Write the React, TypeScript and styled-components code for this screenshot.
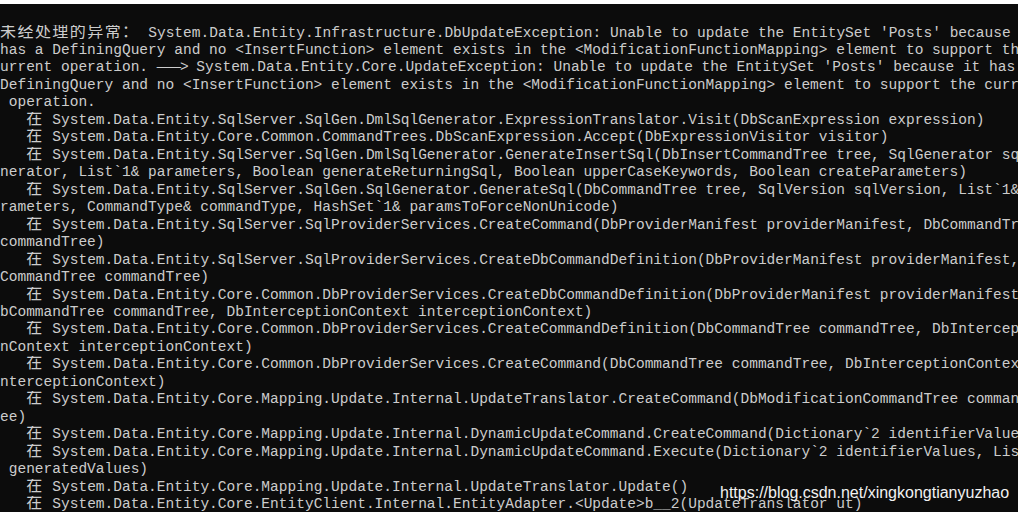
import React from 'react'
import styled, { createGlobalStyle } from 'styled-components'

const GlobalStyle = createGlobalStyle`
  html, body {
    margin: 0;
    padding: 0;
    background: #ffffff;
  }
  #root {
    width: 1018px;
    height: 512px;
    overflow: hidden;
  }
`

const Screen = styled.div`
  position: relative;
  display: flex;
  flex-direction: column;
  width: 1018px;
  height: 512px;
  overflow: hidden;
`

const TopStrip = styled.div`
  height: 4px;
  flex: none;
  background: #ffffff;
`

const Console = styled.div`
  flex: 1;
  background: #0c0c0c;
  color: #cccccc;
  padding-top: 20.5px;
  overflow: hidden;
  font-family: "Liberation Mono", "DejaVu Sans Mono", monospace;
  font-size: 14.53px;
`

const Row = styled.div`
  height: 17.48px;
  line-height: 17.48px;
  white-space: pre;
  overflow: hidden;
`

// full-width characters take two console cells
const Han = styled.span`
  font-family: "Noto Sans CJK SC", "Noto Sans CJK JP", sans-serif;
  font-size: 16px;
  line-height: 0;
  letter-spacing: 1.44px;
`

const Arrow = styled.span`
  letter-spacing: -1px;
`

const Watermark = styled.div`
  position: absolute;
  left: 720px;
  top: 485px;
  font-family: "Liberation Sans", Arial, sans-serif;
  font-size: 16px;
  line-height: 16px;
  color: #f2f2f2;
  white-space: nowrap;
`

const rows: string[] = [
  '未经处理的异常： System.Data.Entity.Infrastructure.DbUpdateException: Unable to update the EntitySet \'Posts\' because it ',
  'has a DefiningQuery and no <InsertFunction> element exists in the <ModificationFunctionMapping> element to support the c',
  'urrent operation. ---> System.Data.Entity.Core.UpdateException: Unable to update the EntitySet \'Posts\' because it has a ',
  'DefiningQuery and no <InsertFunction> element exists in the <ModificationFunctionMapping> element to support the current',
  ' operation.',
  '   在 System.Data.Entity.SqlServer.SqlGen.DmlSqlGenerator.ExpressionTranslator.Visit(DbScanExpression expression)',
  '   在 System.Data.Entity.Core.Common.CommandTrees.DbScanExpression.Accept(DbExpressionVisitor visitor)',
  '   在 System.Data.Entity.SqlServer.SqlGen.DmlSqlGenerator.GenerateInsertSql(DbInsertCommandTree tree, SqlGenerator sqlGe',
  'nerator, List`1& parameters, Boolean generateReturningSql, Boolean upperCaseKeywords, Boolean createParameters)',
  '   在 System.Data.Entity.SqlServer.SqlGen.SqlGenerator.GenerateSql(DbCommandTree tree, SqlVersion sqlVersion, List`1& pa',
  'rameters, CommandType& commandType, HashSet`1& paramsToForceNonUnicode)',
  '   在 System.Data.Entity.SqlServer.SqlProviderServices.CreateCommand(DbProviderManifest providerManifest, DbCommandTree ',
  'commandTree)',
  '   在 System.Data.Entity.SqlServer.SqlProviderServices.CreateDbCommandDefinition(DbProviderManifest providerManifest, Db',
  'CommandTree commandTree)',
  '   在 System.Data.Entity.Core.Common.DbProviderServices.CreateDbCommandDefinition(DbProviderManifest providerManifest, D',
  'bCommandTree commandTree, DbInterceptionContext interceptionContext)',
  '   在 System.Data.Entity.Core.Common.DbProviderServices.CreateCommandDefinition(DbCommandTree commandTree, DbInterceptio',
  'nContext interceptionContext)',
  '   在 System.Data.Entity.Core.Common.DbProviderServices.CreateCommand(DbCommandTree commandTree, DbInterceptionContext i',
  'nterceptionContext)',
  '   在 System.Data.Entity.Core.Mapping.Update.Internal.UpdateTranslator.CreateCommand(DbModificationCommandTree commandTr',
  'ee)',
  '   在 System.Data.Entity.Core.Mapping.Update.Internal.DynamicUpdateCommand.CreateCommand(Dictionary`2 identifierValues)',
  '   在 System.Data.Entity.Core.Mapping.Update.Internal.DynamicUpdateCommand.Execute(Dictionary`2 identifierValues, List`1',
  ' generatedValues)',
  '   在 System.Data.Entity.Core.Mapping.Update.Internal.UpdateTranslator.Update()',
  '   在 System.Data.Entity.Core.EntityClient.Internal.EntityAdapter.<Update>b__2(UpdateTranslator ut)',
]

const renderLine = (line: string) =>
  line.split(/([\u3000-\u9fff\uff00-\uffef]+|--->)/).map((part, i) => {
    if (!part) return null
    if (part === '--->') return <Arrow key={i}>{'———>'}</Arrow>
    if (/^[\u3000-\u9fff\uff00-\uffef]+$/.test(part)) return <Han key={i}>{part}</Han>
    return <React.Fragment key={i}>{part}</React.Fragment>
  })

export default function App() {
  return (
    <>
      <GlobalStyle />
      <Screen>
        <TopStrip />
        <Console>
          {rows.map((line, i) => (
            <Row key={i}>{renderLine(line)}</Row>
          ))}
        </Console>
        <Watermark>https://blog.csdn.net/xingkongtianyuzhao</Watermark>
      </Screen>
    </>
  )
}
